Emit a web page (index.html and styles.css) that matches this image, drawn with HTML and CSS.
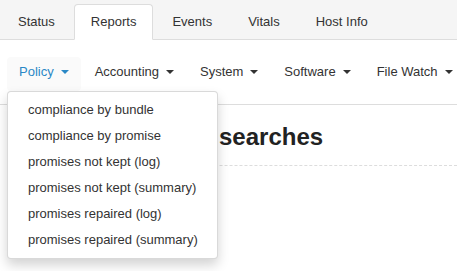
FILE: index.html
```html
<!DOCTYPE html>
<html>
<head>
<meta charset="utf-8">
<link rel="stylesheet" href="styles.css">
</head>
<body>
<div class="page">
  <ul class="tabs">
    <li class="tab"><a>Status</a></li>
    <li class="tab active"><a>Reports</a></li>
    <li class="tab"><a>Events</a></li>
    <li class="tab"><a>Vitals</a></li>
    <li class="tab"><a>Host Info</a></li>
  </ul>
  <div class="subnav">
    <ul class="pills">
      <li class="pill open">
        <a class="pill-link">Policy<span class="caret"></span></a>
        <ul class="dropdown">
          <li>compliance by bundle</li>
          <li>compliance by promise</li>
          <li>promises not kept (log)</li>
          <li>promises not kept (summary)</li>
          <li>promises repaired (log)</li>
          <li>promises repaired (summary)</li>
        </ul>
      </li>
      <li class="pill"><a class="pill-link">Accounting<span class="caret"></span></a></li>
      <li class="pill"><a class="pill-link">System<span class="caret"></span></a></li>
      <li class="pill"><a class="pill-link">Software<span class="caret"></span></a></li>
      <li class="pill"><a class="pill-link">File Watch<span class="caret"></span></a></li>
    </ul>
  </div>
  <div class="content">
    <h3 class="title">searches</h3>
  </div>
</div>
</body>
</html>
```

FILE: styles.css
```css
html {
  overflow: hidden;
}
body {
  margin: 0;
  padding: 0;
  background: #fff;
  font-family: "Liberation Sans", Arial, sans-serif;
  font-size: 13px;
  color: #333;
}
.page {
  width: 457px;
  height: 271px;
  overflow: hidden;
}
ul {
  list-style: none;
  margin: 0;
  padding: 0;
}
.tabs {
  display: flex;
  background: #f5f5f5;
  padding: 4px 0 0 1px;
  border-bottom: 1px solid #ddd;
}
.tab {
  margin-right: 2px;
  margin-bottom: -1px;
}
.tab a {
  display: block;
  padding: 7px 16px;
  line-height: 20px;
  border: 1px solid transparent;
  border-radius: 4px 4px 0 0;
  color: #333;
}
.tab.active a {
  background: #fff;
  border-color: #ddd #ddd transparent;
}
.subnav {
  padding: 17px 0 13px 7px;
  border-bottom: 1px solid #ddd;
  background: #fff;
}
.pills {
  display: flex;
}
.pill {
  position: relative;
  margin-right: 2px;
  flex-shrink: 0;
}
.pill-link {
  display: block;
  padding: 5px 12px 9px;
  line-height: 20px;
  border-radius: 4px;
  color: #333;
  white-space: nowrap;
}
.pill.open .pill-link {
  background: #fafafa;
  color: #2a88c6;
}
.caret {
  display: inline-block;
  width: 0;
  height: 0;
  margin-left: 7px;
  vertical-align: 2px;
  border-top: 4px solid currentColor;
  border-left: 4px solid transparent;
  border-right: 4px solid transparent;
}
.dropdown {
  position: absolute;
  top: 34px;
  left: 0;
  z-index: 10;
  width: 209px;
  padding: 5px 0;
  background: #fff;
  border: 1px solid rgba(0, 0, 0, 0.15);
  border-radius: 4px;
  box-shadow: 0 6px 12px rgba(0, 0, 0, 0.175);
}
.dropdown li {
  padding: 5px 20px;
  line-height: 16px;
  color: #333;
  white-space: nowrap;
}
.content {
  padding: 0 0 0 20px;
}
.title {
  margin: 0;
  padding: 19px 0 15px 199px;
  font-size: 24px;
  line-height: 26px;
  font-weight: bold;
  color: #222;
  border-bottom: 1px dashed #ddd;
}
```
